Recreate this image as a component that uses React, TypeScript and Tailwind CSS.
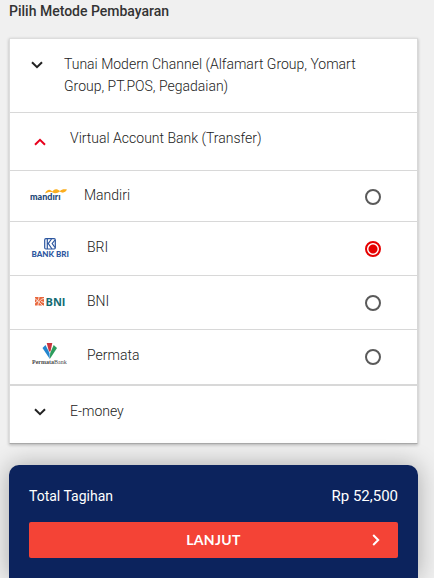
import { useState } from "react";
import type { ReactNode } from "react";

function Chevron({ className }: { className: string }) {
  return (
    <svg viewBox="0 0 12 8" className={`h-2 w-3 shrink-0 fill-none stroke-current stroke-2 ${className}`} aria-hidden="true">
      <path d="M1 1.2 6 6.2 11 1.2" />
    </svg>
  );
}

function MandiriLogo() {
  return (
    <svg viewBox="0 0 38 28" className="h-7 w-[38px] shrink-0" aria-hidden="true">
      <path
        d="M15 10.500C16.500 7 19 6 21 7.400L22.500 8.400C24 6.400 25.500 5.800 27.500 6.600L30 8C31.500 6.200 34.500 6 37 6.600C36 8.600 34 10 32 9.600L29.500 8.600C28 10 26 10.600 24 10L21.500 9C19.500 8.600 17 9.200 15 10.500Z"
        fill="#fbae1e"
      />
      <text x="0" y="17" fontSize="9" fontWeight="900" fill="#1d4777" className="font-['Lato',sans-serif]">
        mandırı
      </text>
    </svg>
  );
}

function BriLogo() {
  return (
    <svg viewBox="0 0 41 28" className="h-7 w-[41px] shrink-0" aria-hidden="true">
      <rect x="14.700" y="3.700" width="10.600" height="10.300" rx="1.200" fill="none" stroke="#2c569f" strokeWidth="1.200" />
      <path d="M17.300 4V14M21.500 4L18.300 8.500L22 14M25 5L22.200 8.500L25 12.500" fill="none" stroke="#2c569f" strokeWidth="1.200" />
      <text x="1.500" y="22" fontSize="8" fontWeight="900" fill="#2c569f" className="font-['Lato',sans-serif]">
        BANK BRI
      </text>
    </svg>
  );
}

function BniLogo() {
  return (
    <svg viewBox="0 0 41 28" className="h-7 w-[41px] shrink-0" aria-hidden="true">
      <rect x="5" y="8" width="9" height="8.500" fill="#e8673c" />
      <path d="M5 9.500L13 17M8 17C8 13.500 10 10 14 9.500M5 14C7 13 9 10.500 9 8M11 12.500L14 13.500" fill="none" stroke="#fff" strokeWidth="0.800" />
      <text x="15.500" y="16.500" fontSize="11" fontWeight="700" fill="#136b73" className="font-['Open_Sans',sans-serif]">
        BNI
      </text>
    </svg>
  );
}

function PermataLogo() {
  return (
    <svg viewBox="0 0 41 28" className="h-7 w-[41px] shrink-0" aria-hidden="true">
      <path d="M16.700 0H22.300L20.500 8.500H19Z" fill="#c9353f" />
      <path d="M12.500 5L15.500 2L19.500 10L19.800 16Z" fill="#2486ce" />
      <path d="M27 5L23.700 2L20.200 10L19.800 16Z" fill="#2c9c5d" />
      <text x="2" y="21" fontSize="6" fontWeight="700" fill="#4a4a4a" className="font-['Liberation_Serif',serif]">
        Permata<tspan fontWeight="400">Bank</tspan>
      </text>
    </svg>
  );
}

function Group({ label, open = false, inset = "gap-6 pl-6" }: { label: string; open?: boolean; inset?: string }) {
  return (
    <button type="button" aria-expanded={open} className={`flex w-full pt-3.5 pr-10 text-left ${inset}`}>
      <span className={`flex items-center ${open ? "h-[30px] text-[#e8001c]" : "h-6 text-[#222]"}`}>
        <Chevron className={open ? "rotate-180" : ""} />
      </span>
      <span className="font-light">{label}</span>
    </button>
  );
}

const banks: { name: string; logo: ReactNode }[] = [
  { name: "Mandiri", logo: <MandiriLogo /> },
  { name: "BRI", logo: <BriLogo /> },
  { name: "BNI", logo: <BniLogo /> },
  { name: "Permata", logo: <PermataLogo /> },
];

export default function App() {
  const [bank, setBank] = useState("BRI");
  return (
    <main className="flex min-h-screen flex-col overflow-hidden bg-[#f0f0f0] pr-4 pl-[9px] font-['Roboto',sans-serif] text-[14px] leading-[22px] text-[#222]">
      <h1 className="font-medium text-[#333]">Pilih Metode Pembayaran</h1>

      <section className="mt-4 divide-y divide-[#d8d8d8] border border-t-[#ddd] border-r-[#d8d8d8] border-b-[#aaa] border-l-[#ddd] bg-white shadow-[0_1px_3px_rgba(0,0,0,0.25)]">
        <div className="pb-[15px]">
          <Group label="Tunai Modern Channel (Alfamart Group, Yomart Group, PT.POS, Pegadaian)" inset="gap-[21px] pl-[21px]" />
        </div>
        <div className="pb-[13px]">
          <Group label="Virtual Account Bank (Transfer)" open />
        </div>
        <fieldset className="divide-y divide-[#d8d8d8]">
          {banks.map(({ name, logo }) => (
            <label key={name} className="flex h-[54px] items-center gap-4 pr-9 pl-5 first:h-[51px] first:pt-0.5">
              {logo}
              <span className="flex-1 pb-1 font-light">{name}</span>
              <input
                type="radio"
                name="bank"
                value={name}
                checked={bank === name}
                onChange={() => setBank(name)}
                className="size-4 appearance-none rounded-full border-2 border-[#5a5a5a] checked:border-[#e60000] checked:bg-[radial-gradient(circle,#e60000_4px,#fff_5px)]"
              />
            </label>
          ))}
        </fieldset>
        <div className="border-t border-[#d8d8d8] pb-[19px]">
          <Group label="E-money" />
        </div>
      </section>

      <footer className="mt-[21px] flex-1 rounded-t-[10px] bg-[#0c235d] px-5 pt-5 pb-5 text-white shadow-[0_0_24px_rgba(0,0,0,0.3)]">
        <div className="flex justify-between">
          <span>Total Tagihan</span>
          <span className="text-[15px]">Rp 52,500</span>
        </div>
        <button type="button" className="mt-[15px] flex h-9 w-full items-center rounded-[2px] bg-[#f44336] pr-4 pl-7 font-['Lato',sans-serif] text-[14px] font-bold tracking-wide">
          <span className="flex-1">LANJUT</span>
          <Chevron className="-rotate-90" />
        </button>
      </footer>
    </main>
  );
}
